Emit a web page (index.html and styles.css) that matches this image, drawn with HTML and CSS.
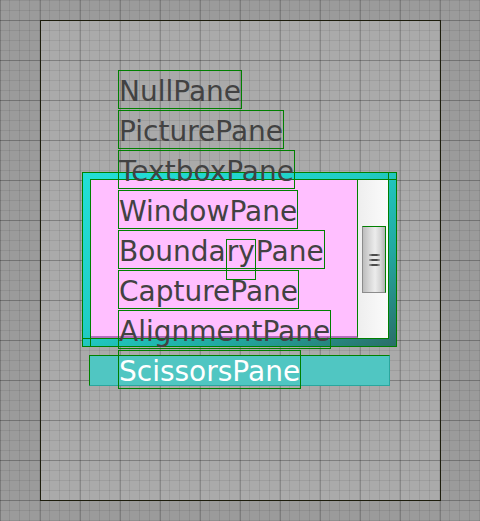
FILE: index.html
```html
<!DOCTYPE html>
<html>
<head>
<meta charset="utf-8">
<link rel="stylesheet" href="styles.css">
</head>
<body>
<div class="canvas">
  <div class="frame">
    <div class="pink"></div>
    <div class="scroll">
      <div class="thumb"><i></i><i></i><i></i></div>
    </div>
    <div class="outline outline-b"></div>
    <div class="outline outline-c"></div>
  </div>
  <div class="bar"></div>
  <div class="panes">
    <div class="pane">NullPane</div>
    <div class="pane">PicturePane</div>
    <div class="pane">TextboxPane</div>
    <div class="pane">WindowPane</div>
    <div class="pane">Bounda<span class="sub">ry</span>Pane</div>
    <div class="pane">CapturePane</div>
    <div class="pane">AlignmentPane</div>
    <div class="pane pane-light">ScissorsPane</div>
  </div>
</div>
</body>
</html>
```
FILE: styles.css
```css
html, body {
  margin: 0;
  padding: 0;
}
body {
  width: 480px;
  height: 521px;
  overflow: hidden;
  background-color: #9b9b9b;
  background-image:
    linear-gradient(to right, rgba(0,0,0,0.2) 1px, transparent 1px),
    linear-gradient(to bottom, rgba(0,0,0,0.2) 1px, transparent 1px),
    linear-gradient(to right, rgba(0,0,0,0.08) 1px, transparent 1px),
    linear-gradient(to bottom, rgba(0,0,0,0.08) 1px, transparent 1px);
  background-size: 40px 40px, 40px 40px, 10px 10px, 10px 10px;
  background-position: 0 0, 0 20px, 9px 0, 0 0;
  font-family: "DejaVu Sans", sans-serif;
}
.canvas {
  position: relative;
  box-sizing: border-box;
  margin: 20px 0 0 40px;
  width: 401px;
  height: 481px;
  border: 1px solid #1c1c0c;
  padding: 49px 0 0 77px;
  background-color: #aaaaaa;
  background-image:
    linear-gradient(to right, rgba(0,0,0,0.2) 1px, transparent 1px),
    linear-gradient(to bottom, rgba(0,0,0,0.2) 1px, transparent 1px),
    linear-gradient(to right, rgba(0,0,0,0.08) 1px, transparent 1px),
    linear-gradient(to bottom, rgba(0,0,0,0.08) 1px, transparent 1px);
  background-size: 40px 40px, 40px 40px, 10px 10px, 10px 10px;
  background-position: 0 0, 0 20px, 9px 0, 0 0;
  background-attachment: fixed;
}
.frame {
  position: absolute;
  left: 41px;
  top: 151px;
  width: 315px;
  height: 175px;
  box-sizing: border-box;
  border: 1px solid #008000;
  background: linear-gradient(to bottom right, #22e0d8 0%, #20cdc5 45%, #22a8a0 72%, #2a6e68 100%);
}
.outline {
  position: absolute;
  box-sizing: border-box;
  border: 1px solid #008000;
}
.outline-b {
  left: -1px;
  top: -1px;
  width: 307px;
  height: 167px;
}
.outline-c {
  left: 7px;
  top: 6px;
  width: 307px;
  height: 168px;
}
.pink {
  position: absolute;
  left: 8px;
  top: 7px;
  width: 267px;
  height: 158px;
  box-sizing: border-box;
  background: #ffbfff;
  border-right: 1px solid #008000;
  border-bottom: 2px solid #b46cbc;
}
.scroll {
  position: absolute;
  left: 275px;
  top: 7px;
  width: 30px;
  height: 158px;
  background: linear-gradient(to right, #eeeeee, #f6f6f6 60%, #fbfbfb);
}
.thumb {
  position: absolute;
  left: 4px;
  top: 46px;
  width: 24px;
  height: 67px;
  box-sizing: border-box;
  border: 1px solid #8c8c8c;
  border-top-color: #008000;
  border-right-color: #008000;
  background: linear-gradient(to right, #bdbdbd 0%, #d8d8d8 30%, #ececec 55%, #d4d4d4 80%, #b2b2b2 100%);
  display: flex;
  flex-direction: column;
  align-items: center;
  justify-content: center;
  gap: 3px;
}
.thumb i {
  display: block;
  width: 11px;
  height: 2px;
  background: linear-gradient(to right, rgba(60,60,60,0.3), #4a4a4a 30%, #4a4a4a 70%, rgba(60,60,60,0.3));
}
.bar {
  position: absolute;
  left: 48px;
  top: 334px;
  width: 301px;
  height: 31px;
  box-sizing: border-box;
  background: #50c6c2;
  border: 1px solid #2aa69e;
  border-top-color: #008000;
  border-left-color: #008000;
}
.panes {
  position: relative;
  display: flex;
  flex-direction: column;
  align-items: flex-start;
  gap: 1px;
}
.pane {
  box-sizing: border-box;
  height: 39px;
  border: 1px solid #008000;
  padding-top: 5px;
  font-size: 28px;
  line-height: 32px;
  color: #424242;
  white-space: nowrap;
}
.pane-light {
  color: #ffffff;
}
.sub {
  display: inline-block;
  box-sizing: border-box;
  height: 41px;
  line-height: 23.6px;
  border: 1px solid #008000;
  vertical-align: baseline;
}
```
